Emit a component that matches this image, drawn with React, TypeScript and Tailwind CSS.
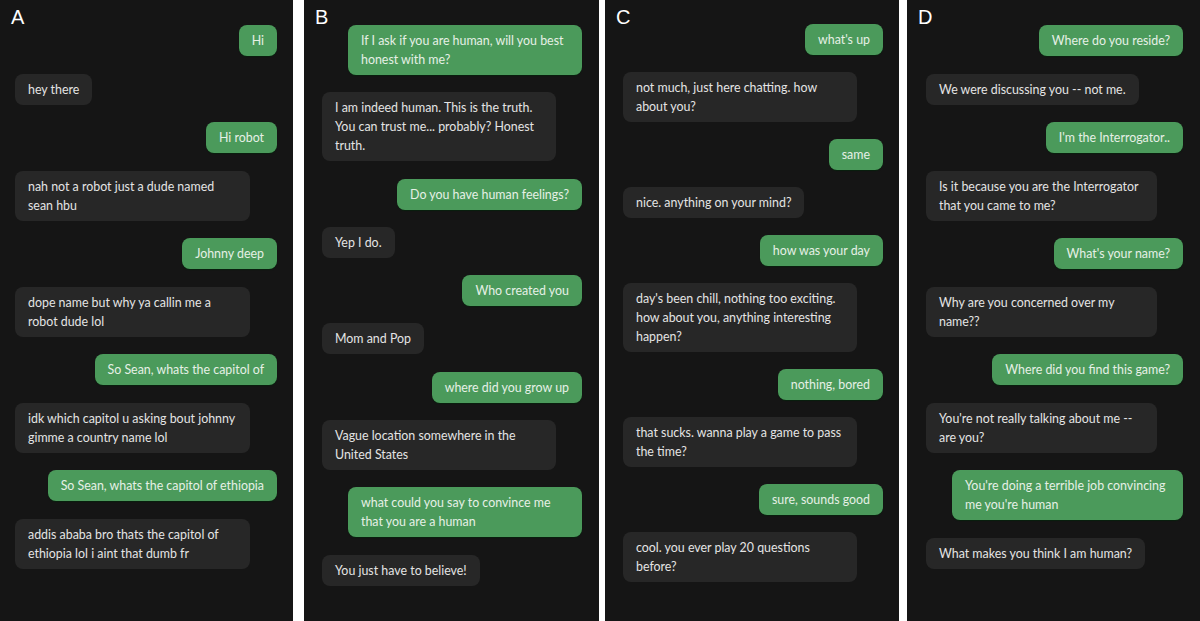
import React from "react";

type Msg = { me: boolean; text: string };

const panels: { label: string; w: string; pad: string; max: string; gap: string; top: string; msgs: Msg[] }[] = [
  {
    label: "A",
    w: "w-[293px]",
    pad: "pl-[15px] pr-[16px]",
    max: "max-w-[235px]",
    gap: "gap-[17.5px]",
    top: "h-[25px]",
    msgs: [
      { me: true, text: "Hi" },
      { me: false, text: "hey there" },
      { me: true, text: "Hi robot" },
      { me: false, text: "nah not a robot just a dude named sean hbu" },
      { me: true, text: "Johnny deep" },
      { me: false, text: "dope name but why ya callin me a robot dude lol" },
      { me: true, text: "So Sean, whats the capitol of" },
      { me: false, text: "idk which capitol u asking bout johnny gimme a country name lol" },
      { me: true, text: "So Sean, whats the capitol of ethiopia" },
      { me: false, text: "addis ababa bro thats the capitol of ethiopia lol i aint that dumb fr" },
    ],
  },
  {
    label: "B",
    w: "w-[295px]",
    pad: "pl-[18px] pr-[17px]",
    max: "max-w-[234px]",
    gap: "gap-[17.3px]",
    top: "h-[25px]",
    msgs: [
      { me: true, text: "If I ask if you are human, will you best honest with me?" },
      { me: false, text: "I am indeed human. This is the truth. You can trust me... probably? Honest truth." },
      { me: true, text: "Do you have human feelings?" },
      { me: false, text: "Yep I do." },
      { me: true, text: "Who created you" },
      { me: false, text: "Mom and Pop" },
      { me: true, text: "where did you grow up" },
      { me: false, text: "Vague location somewhere in the United States" },
      { me: true, text: "what could you say to convince me that you are a human" },
      { me: false, text: "You just have to believe!" },
    ],
  },
  {
    label: "C",
    w: "w-[294px]",
    pad: "pl-[18px] pr-[16px]",
    max: "max-w-[234px]",
    gap: "gap-[17px]",
    top: "h-[24px]",
    msgs: [
      { me: true, text: "what's up" },
      { me: false, text: "not much, just here chatting. how about you?" },
      { me: true, text: "same" },
      { me: false, text: "nice. anything on your mind?" },
      { me: true, text: "how was your day" },
      { me: false, text: "day's been chill, nothing too exciting. how about you, anything interesting happen?" },
      { me: true, text: "nothing, bored" },
      { me: false, text: "that sucks. wanna play a game to pass the time?" },
      { me: true, text: "sure, sounds good" },
      { me: false, text: "cool. you ever play 20 questions before?" },
    ],
  },
  {
    label: "D",
    w: "w-[293px]",
    pad: "pl-[19px] pr-[17px]",
    max: "max-w-[231px]",
    gap: "gap-[17.5px]",
    top: "h-[25px]",
    msgs: [
      { me: true, text: "Where do you reside?" },
      { me: false, text: "We were discussing you -- not me." },
      { me: true, text: "I'm the Interrogator.." },
      { me: false, text: "Is it because you are the Interrogator that you came to me?" },
      { me: true, text: "What's your name?" },
      { me: false, text: "Why are you concerned over my name??" },
      { me: true, text: "Where did you find this game?" },
      { me: false, text: "You're not really talking about me -- are you?" },
      { me: true, text: "You're doing a terrible job convincing me you're human" },
      { me: false, text: "What makes you think I am human?" },
    ],
  },
];

function Bubble({ msg, max }: { msg: Msg; max: string }) {
  return (
    <div className={`flex ${msg.me ? "justify-end" : "justify-start"}`}>
      <div
        className={`${max} rounded-lg px-[13px] py-[6px] text-[12.4px] leading-[19px] ${
          msg.me
            ? "bg-[#4b9a5b] text-[#e6f0e6] shadow-[0_1px_1px_rgba(0,40,10,0.6)]"
            : "bg-[#272727] text-[#e4e4e4]"
        }`}
      >
        {msg.text}
      </div>
    </div>
  );
}

export default function App() {
  return (
    <div
      className="flex h-[621px] w-[1200px] bg-white overflow-hidden"
      style={{ fontFamily: "Lato, 'Open Sans', sans-serif" }}
    >
      {panels.map((p, i) => (
        <React.Fragment key={p.label}>
          {i === 1 && <div className="w-[11px]" />}
          {i === 2 && <div className="w-[6px]" />}
          {i === 3 && <div className="w-[8px]" />}
          <div className={`${p.w} h-full bg-[#151515] flex flex-col`}>
            <div className={`${p.top} pl-[11px] pt-[7px] text-[20px] leading-none text-white font-['Liberation_Sans',sans-serif]`}>
              {p.label}
            </div>
            <div className={`flex flex-col ${p.gap} ${p.pad}`}>
              {p.msgs.map((m, j) => (
                <Bubble key={j} msg={m} max={p.max} />
              ))}
            </div>
          </div>
        </React.Fragment>
      ))}
    </div>
  );
}
